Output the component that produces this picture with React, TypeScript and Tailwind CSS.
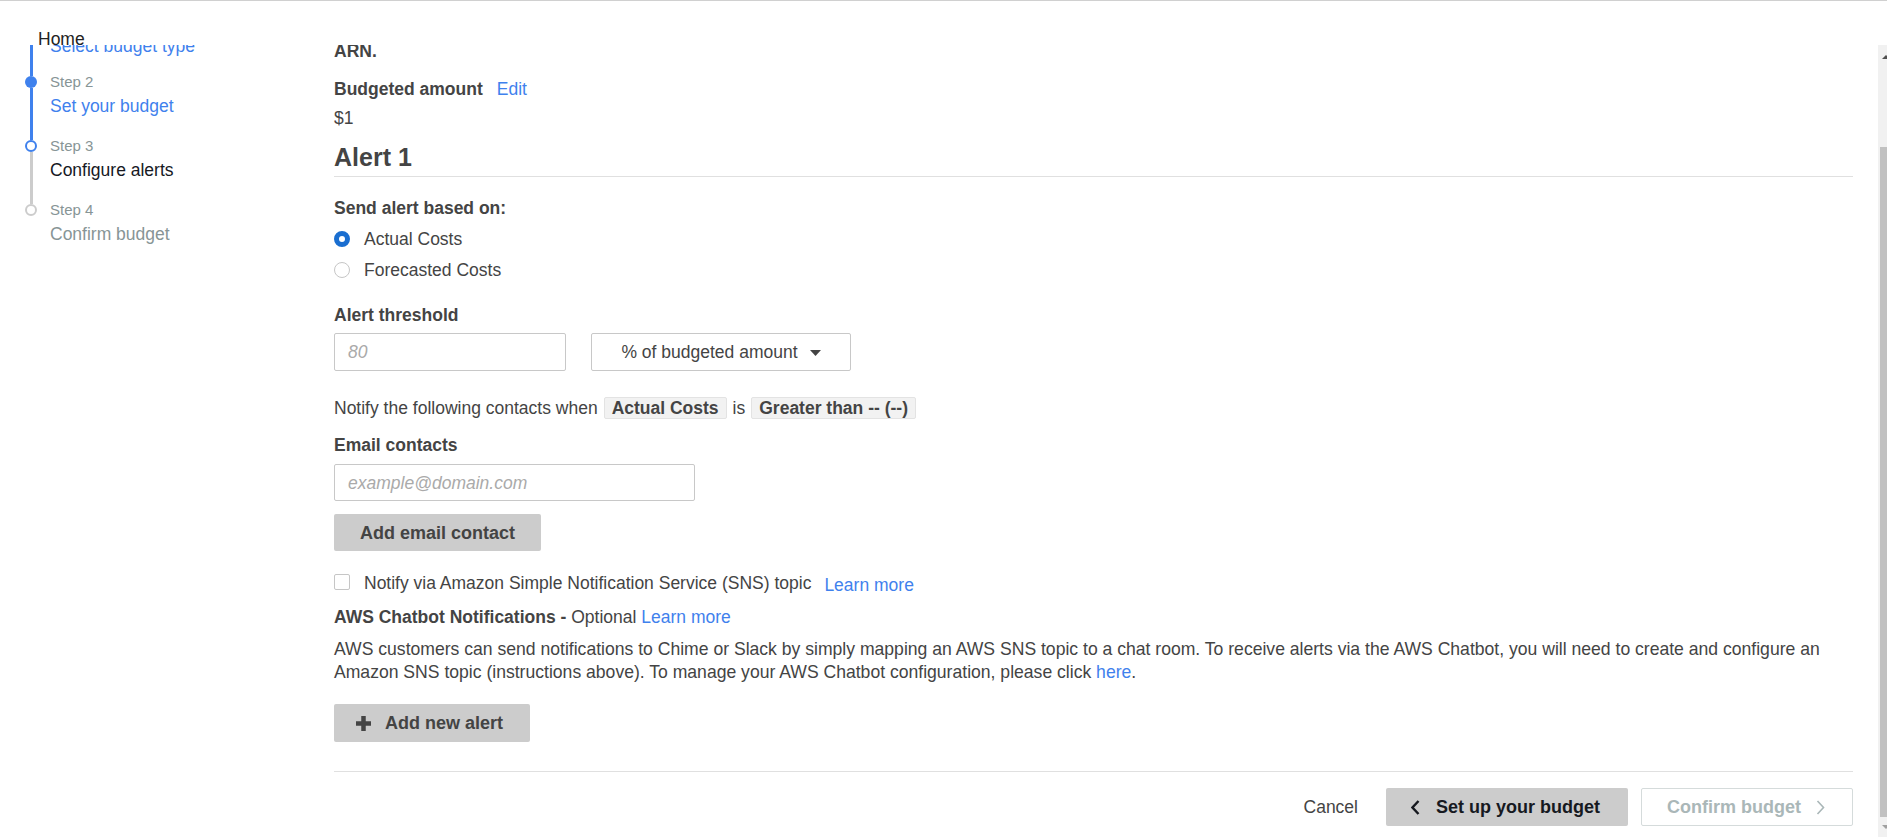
import { useState } from "react";

type StepState = "done" | "current" | "todo";

type Step = {
  label: string;
  title: string;
  state: StepState;
  lineIn: string;
  lineOut: string;
  first?: boolean;
};

const steps: Step[] = [
  { label: "Step 1", title: "Select budget type", state: "done", lineIn: "bg-[#3f81ed]", lineOut: "bg-[#3f81ed]", first: true },
  { label: "Step 2", title: "Set your budget", state: "done", lineIn: "bg-[#3f81ed]", lineOut: "bg-[#3f81ed]" },
  { label: "Step 3", title: "Configure alerts", state: "current", lineIn: "bg-[#3f81ed]", lineOut: "bg-[#cccccc]" },
  { label: "Step 4", title: "Confirm budget", state: "todo", lineIn: "bg-[#cccccc]", lineOut: "" },
];

const circleClass: Record<StepState, string> = {
  done: "bg-[#3f81ed]",
  current: "bg-white border-2 border-[#3f81ed]",
  todo: "bg-white border-2 border-[#cccccc]",
};

const titleClass: Record<StepState, string> = {
  done: "text-[#3f81ed]",
  current: "text-[#16191f]",
  todo: "text-[#879596]",
};

const Stepper = () => (
  <div className="w-[334px] shrink-0 pl-[25px] mt-[-33px] flex flex-col">
    {steps.map((s) => (
      <div key={s.label} className={`flex ${s.first ? "h-[60px]" : "h-[64px]"}`}>
        <div className="w-[12px] flex flex-col items-center">
          <div className={`w-[3px] h-[4px] ${s.lineIn}`} />
          <div className={`w-[12px] h-[12px] rounded-full box-border shrink-0 ${circleClass[s.state]}`} />
          {s.lineOut && <div className={`w-[3px] flex-1 ${s.lineOut}`} />}
        </div>
        <div className="ml-[13px] flex flex-col">
          <div className="text-[15px] leading-[20px] text-[#879596]">{s.label}</div>
          <div className={`text-[17.5px] leading-[24px] mt-[2px] whitespace-nowrap ${titleClass[s.state]}`}>
            {s.title}
          </div>
        </div>
      </div>
    ))}
  </div>
);

const Badge = ({ children }: { children: string }) => (
  <span className="h-[22px] px-[7px] flex items-center bg-[#f2f2f2] border border-[#e3e3e3] rounded-[2px] font-bold text-[#444]">
    {children}
  </span>
);

const AlertForm = () => {
  const [basis, setBasis] = useState<"actual" | "forecast">("actual");
  const [snsChecked, setSnsChecked] = useState(false);

  const radio = (value: "actual" | "forecast", label: string) => (
    <label className="flex items-center h-[20px] cursor-pointer" onClick={() => setBasis(value)}>
      <span
        className={`w-4 h-4 rounded-full box-border bg-white ${
          basis === value ? "border-[5px] border-[#1a6ed0]" : "border border-[#c6c6c6]"
        }`}
      />
      <span className="ml-[14px]">{label}</span>
    </label>
  );

  return (
    <div className="w-[1519px] shrink-0 flex flex-col text-[17.5px] leading-[20px] text-[#444]">
      <div className="mt-[-4px] font-bold">ARN.</div>

      <div className="mt-[18px] flex">
        <span className="font-bold">Budgeted amount</span>
        <a className="ml-[14px] text-[#3f81ed] cursor-pointer">Edit</a>
      </div>
      <div className="mt-[9px]">$1</div>

      <div className="mt-[14px] pb-[4px] border-b border-[#e0e0e0]">
        <h2 className="text-[25px] leading-[30px] font-bold text-[#444]">Alert 1</h2>
      </div>

      <div className="mt-[21px] font-bold">Send alert based on:</div>
      <div className="mt-[11px] flex flex-col gap-[11px]">
        {radio("actual", "Actual Costs")}
        {radio("forecast", "Forecasted Costs")}
      </div>

      <div className="mt-[25px] font-bold">Alert threshold</div>
      <div className="mt-[8px] flex gap-[25px]">
        <div className="w-[232px] h-[38px] border border-[#c8c8c8] rounded-[2px] flex items-center pl-[13px] italic text-[#aaaaaa]">
          80
        </div>
        <div className="w-[260px] h-[38px] border border-[#c8c8c8] rounded-[2px] flex items-center justify-center gap-[12px] text-[#444]">
          <span>% of budgeted amount</span>
          <svg width="11" height="6" viewBox="0 0 11 6" className="mt-[1px]">
            <path d="M0 0h11L5.5 6z" fill="#444" />
          </svg>
        </div>
      </div>

      <div className="mt-[26px] flex items-center leading-[22px] h-[22px]">
        <span>Notify the following contacts when</span>
        <span className="ml-[6px]">
          <Badge>Actual Costs</Badge>
        </span>
        <span className="mx-[6px]">is</span>
        <Badge>Greater than -- (--)</Badge>
      </div>

      <div className="mt-[16px] font-bold">Email contacts</div>
      <div className="mt-[9px] w-[361px] h-[37px] border border-[#c8c8c8] rounded-[2px] flex items-center pl-[13px] italic text-[#aaaaaa]">
        example@domain.com
      </div>
      <button className="mt-[13px] w-[207px] h-[37px] bg-[#cccccc] rounded-[2px] font-bold text-[18px] text-[#444] flex items-center justify-center">
        Add email contact
      </button>

      <div className="mt-[22px] flex items-start h-[20px]">
        <span
          className={`mt-[1px] w-4 h-4 rounded-[2px] border box-border cursor-pointer ${
            snsChecked ? "bg-[#1a6ed0] border-[#1a6ed0]" : "bg-white border-[#c6c6c6]"
          }`}
          onClick={() => setSnsChecked((v) => !v)}
        />
        <span className="ml-[14px]">Notify via Amazon Simple Notification Service (SNS) topic</span>
        <a className="ml-[13px] mt-[2px] text-[#3f81ed] cursor-pointer">Learn more</a>
      </div>

      <div className="mt-[14px]">
        <span className="font-bold">AWS Chatbot Notifications - </span>
        <span>Optional </span>
        <a className="text-[#3f81ed] cursor-pointer">Learn more</a>
      </div>
      <p className="mt-[11px] leading-[23px] text-[17.58px]">
        AWS customers can send notifications to Chime or Slack by simply mapping an AWS SNS topic to a chat room. To
        receive alerts via the AWS Chatbot, you will need to create and configure an Amazon SNS topic (instructions
        above). To manage your AWS Chatbot configuration, please click{" "}
        <a className="text-[#3f81ed] cursor-pointer">here</a>.
      </p>

      <button className="mt-[20px] w-[196px] h-[38px] bg-[#cccccc] rounded-[2px] font-bold text-[18px] text-[#444] flex items-center pl-[21px]">
        <svg width="17" height="17" viewBox="0 0 17 17">
          <path d="M8.5 1v15M1 8.5h15" stroke="#444" strokeWidth="4.5" />
        </svg>
        <span className="ml-[13px]">Add new alert</span>
      </button>

      <div className="mt-[29px] border-t border-[#e0e0e0]" />

      <div className="mt-[16px] flex items-center justify-end">
        <button className="text-[#444]">Cancel</button>
        <button className="ml-[28px] w-[242px] h-[38px] bg-[#cccccc] rounded-[2px] flex items-center pl-[25px] font-bold text-[18px] text-[#16191f]">
          <svg width="9" height="15" viewBox="0 0 9 15">
            <path d="M7.5 1L1.5 7.5L7.5 14" fill="none" stroke="#16191f" strokeWidth="2.4" />
          </svg>
          <span className="ml-[16px]">Set up your budget</span>
        </button>
        <button className="ml-[13px] w-[212px] h-[38px] bg-white border border-[#d5dbdb] rounded-[2px] flex items-center pl-[25px] font-bold text-[18px] text-[#aab7b8]">
          <span>Confirm budget</span>
          <svg width="9" height="15" viewBox="0 0 9 15" className="ml-[15px]">
            <path d="M1.5 1L7.5 7.5L1.5 14" fill="none" stroke="#aab7b8" strokeWidth="1.6" />
          </svg>
        </button>
      </div>
    </div>
  );
};

const Scrollbar = () => (
  <div className="w-[9px] shrink-0 bg-[#f1f1f1] flex flex-col">
    <div className="h-[102px]">
      <svg width="9" height="6" viewBox="0 0 9 6" className="mt-[9px] ml-[4px]">
        <path d="M4 1L8 5H0z" fill="#505050" />
      </svg>
    </div>
    <div className="ml-[2px] h-[670px] bg-[#c1c1c1]" />
    <div className="flex-1">
      <svg width="9" height="6" viewBox="0 0 9 6" className="mt-[7px] ml-[4px]">
        <path d="M0 1H8L4 5z" fill="#a0a0a0" />
      </svg>
    </div>
  </div>
);

export default function App() {
  return (
    <div className="h-[837px] w-full overflow-hidden bg-white border-t border-[#d0d0d0] flex flex-col font-['Liberation_Sans',Arial,sans-serif]">
      <div className="h-[44px] shrink-0 relative z-10">
        <div className="pl-[38px] pt-[28px] text-[17.5px] leading-[20px] text-[#222]">Home</div>
      </div>
      <div className="flex-1 flex min-h-0">
        <div className="flex-1 overflow-hidden flex">
          <Stepper />
          <AlertForm />
        </div>
        <Scrollbar />
      </div>
    </div>
  );
}
